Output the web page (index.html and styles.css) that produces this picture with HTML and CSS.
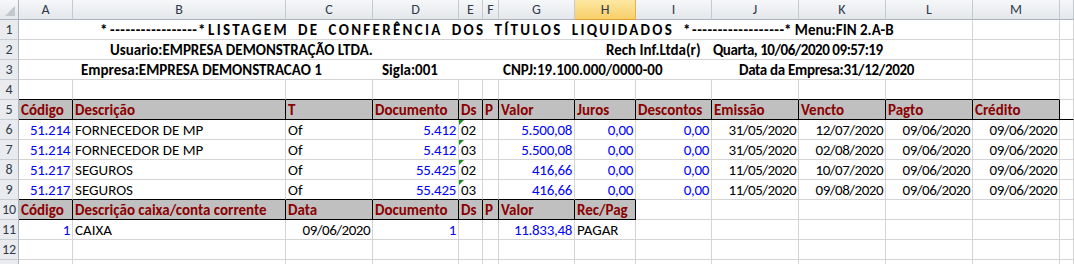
FILE: index.html
```html
<!DOCTYPE html>
<html lang="pt-BR">
<head>
<meta charset="utf-8">
<title>Listagem de Conferência dos Títulos Liquidados</title>
<link rel="stylesheet" href="styles.css">
</head>
<body>
<div class="sheet">
  <div class="row colhdr">
    <div class="corner"></div>
    <div class="ch">A</div><div class="ch">B</div><div class="ch">C</div><div class="ch">D</div><div class="ch">E</div><div class="ch">F</div><div class="ch">G</div><div class="ch sel">H</div><div class="ch">I</div><div class="ch">J</div><div class="ch">K</div><div class="ch">L</div><div class="ch">M</div><div class="ch"></div>
  </div>

  <div class="row">
    <div class="rh">1</div>
    <div class="c merged b title">
      <span>*</span><span class="dash">-----------------</span><span>*</span><span class="spaced">LISTAGEM DE CONFERÊNCIA DOS TÍTULOS LIQUIDADOS</span><span>*</span><span class="dash">------------------</span><span>* Menu:FIN 2.A-B</span>
    </div>
    <div class="c"></div><div class="c"></div>
  </div>

  <div class="row">
    <div class="rh">2</div>
    <div class="c merged b line2">
      <span>Usuario:EMPRESA DEMONSTRAÇÃO LTDA.</span><span>Rech Inf.Ltda(r)</span><span class="num">Quarta, 10/06/2020 09:57:19</span>
    </div>
    <div class="c"></div><div class="c"></div>
  </div>

  <div class="row">
    <div class="rh">3</div>
    <div class="c merged b line3">
      <span>Empresa:EMPRESA DEMONSTRACAO 1</span><span>Sigla:001</span><span>CNPJ:19.100.000/0000-00</span><span class="num2">Data da Empresa:31/12/2020</span>
    </div>
    <div class="c"></div><div class="c"></div>
  </div>

  <div class="row">
    <div class="rh">4</div>
    <div class="c bb"></div><div class="c bb"></div><div class="c bb"></div><div class="c bb"></div><div class="c bb"></div><div class="c bb"></div><div class="c bb"></div><div class="c bb"></div><div class="c bb"></div><div class="c bb"></div><div class="c bb"></div><div class="c bb"></div><div class="c bb"></div><div class="c"></div>
  </div>

  <div class="row">
    <div class="rh">5</div>
    <div class="c h">Código</div><div class="c h">Descrição</div><div class="c h">T</div><div class="c h">Documento</div><div class="c h">Ds</div><div class="c h">P</div><div class="c h">Valor</div><div class="c h">Juros</div><div class="c h">Descontos</div><div class="c h">Emissão</div><div class="c h">Vencto</div><div class="c h">Pagto</div><div class="c h">Crédito</div><div class="c bb"></div>
  </div>

  <div class="row">
    <div class="rh">6</div>
    <div class="c n">51.214</div><div class="c">FORNECEDOR DE MP</div><div class="c">Of</div><div class="c n">5.412</div><div class="c tx">02</div><div class="c"></div><div class="c n">5.500,08</div><div class="c n">0,00</div><div class="c n">0,00</div><div class="c r">31/05/2020</div><div class="c r">12/07/2020</div><div class="c r">09/06/2020</div><div class="c r">09/06/2020</div><div class="c"></div>
  </div>

  <div class="row">
    <div class="rh">7</div>
    <div class="c n">51.214</div><div class="c">FORNECEDOR DE MP</div><div class="c">Of</div><div class="c n">5.412</div><div class="c tx">03</div><div class="c"></div><div class="c n">5.500,08</div><div class="c n">0,00</div><div class="c n">0,00</div><div class="c r">31/05/2020</div><div class="c r">02/08/2020</div><div class="c r">09/06/2020</div><div class="c r">09/06/2020</div><div class="c"></div>
  </div>

  <div class="row">
    <div class="rh">8</div>
    <div class="c n">51.217</div><div class="c">SEGUROS</div><div class="c">Of</div><div class="c n">55.425</div><div class="c tx">02</div><div class="c"></div><div class="c n">416,66</div><div class="c n">0,00</div><div class="c n">0,00</div><div class="c r">11/05/2020</div><div class="c r">10/07/2020</div><div class="c r">09/06/2020</div><div class="c r">09/06/2020</div><div class="c"></div>
  </div>

  <div class="row">
    <div class="rh">9</div>
    <div class="c n bb">51.217</div><div class="c bb">SEGUROS</div><div class="c bb">Of</div><div class="c n bb">55.425</div><div class="c tx bb">03</div><div class="c bb"></div><div class="c n bb">416,66</div><div class="c n bb">0,00</div><div class="c n">0,00</div><div class="c r">11/05/2020</div><div class="c r">09/08/2020</div><div class="c r">09/06/2020</div><div class="c r">09/06/2020</div><div class="c"></div>
  </div>

  <div class="row">
    <div class="rh">10</div>
    <div class="c h">Código</div><div class="c h">Descrição caixa/conta corrente</div><div class="c h">Data</div><div class="c h">Documento</div><div class="c h">Ds</div><div class="c h">P</div><div class="c h">Valor</div><div class="c h">Rec/Pag</div><div class="c"></div><div class="c"></div><div class="c"></div><div class="c"></div><div class="c"></div><div class="c"></div>
  </div>

  <div class="row">
    <div class="rh">11</div>
    <div class="c n">1</div><div class="c">CAIXA</div><div class="c r">09/06/2020</div><div class="c n">1</div><div class="c"></div><div class="c"></div><div class="c n">11.833,48</div><div class="c">PAGAR</div><div class="c"></div><div class="c"></div><div class="c"></div><div class="c"></div><div class="c"></div><div class="c"></div>
  </div>

  <div class="row">
    <div class="rh">12</div>
    <div class="c"></div><div class="c"></div><div class="c"></div><div class="c"></div><div class="c"></div><div class="c"></div><div class="c"></div><div class="c"></div><div class="c"></div><div class="c"></div><div class="c"></div><div class="c"></div><div class="c"></div><div class="c"></div>
  </div>

  <div class="row">
    <div class="rh">13</div>
    <div class="c"></div><div class="c"></div><div class="c"></div><div class="c"></div><div class="c"></div><div class="c"></div><div class="c"></div><div class="c"></div><div class="c"></div><div class="c"></div><div class="c"></div><div class="c"></div><div class="c"></div><div class="c"></div>
  </div>
</div>
</body>
</html>
```
FILE: styles.css
```css
html, body {
  margin: 0;
  padding: 0;
  background: #ffffff;
  overflow: hidden;
}

body {
  font-family: Carlito, Lato, "Open Sans", sans-serif;
  font-size: 15px;
  color: #000000;
}

.sheet {
  width: 1074px;
}

.row {
  display: grid;
  grid-template-columns: 19px 54px 213px 87px 86px 24px 16px 76px 61px 76px 87px 87px 87px 87px 1fr;
  height: 20px;
}

.c {
  box-sizing: border-box;
  height: 20px;
  border-right: 1px solid #d4d4d4;
  border-bottom: 1px solid #d4d4d4;
  padding: 0 2px;
  line-height: 20px;
  white-space: nowrap;
  position: relative;
}

.b { font-weight: bold; }

.n {
  color: #0000ff;
  text-align: right;
  letter-spacing: -0.3px;
}

.r {
  text-align: right;
  letter-spacing: -0.5px;
}

.bb { border-bottom-color: #000000; }

.h {
  background: #c0c0c0;
  color: #8b0000;
  font-weight: bold;
  border-right-color: #000000;
  border-bottom-color: #000000;
}

/* number-stored-as-text marker */
.tx::before {
  content: "";
  position: absolute;
  left: 0;
  top: 0;
  border-top: 5px solid #1f8a1f;
  border-right: 5px solid transparent;
}

/* column header */
.colhdr .corner,
.colhdr .ch {
  box-sizing: border-box;
  height: 20px;
  background: linear-gradient(#f6f7f9, #e4e7eb);
  border-right: 1px solid #c5cad1;
  border-bottom: 1px solid #aab3be;
  text-align: center;
  line-height: 20px;
  color: #2f3b4c;
  font-size: 14px;
}

.colhdr .corner {
  position: relative;
  border-right-color: #aab3be;
}

.colhdr .corner::after {
  content: "";
  position: absolute;
  right: 3px;
  bottom: 3px;
  width: 10px;
  height: 10px;
  background: #c3c8cf;
  clip-path: polygon(100% 0, 100% 100%, 0 100%);
}

.colhdr .ch.sel {
  background: linear-gradient(#fde7a2, #f8cf6a);
  border-right-color: #e7b352;
  border-bottom-color: #d9a02d;
}

/* row header */
.rh {
  box-sizing: border-box;
  height: 20px;
  background: #e9ebee;
  border-right: 1px solid #aab3be;
  border-bottom: 1px solid #c8cdd4;
  text-align: center;
  line-height: 20px;
  color: #2f3b4c;
  font-size: 14px;
}

/* merged cells A:L on rows 1-3 */
.merged {
  grid-column: span 12;
  padding: 0;
}

.title {
  display: grid;
  grid-template-columns: 10px 88px 10px 475px 9px 92px auto;
  padding-left: 81px;
}

.title .dash {
  letter-spacing: 0.55px;
}

.title .spaced {
  letter-spacing: 2.3px;
  word-spacing: 3.5px;
}

.line2 {
  display: grid;
  grid-template-columns: 496px 107px auto;
  padding-left: 91px;
}

.line3 {
  display: grid;
  grid-template-columns: 301px 121px 236px auto;
  padding-left: 62px;
}

.num { letter-spacing: -0.45px; }
.num2 { letter-spacing: -0.3px; }
```
